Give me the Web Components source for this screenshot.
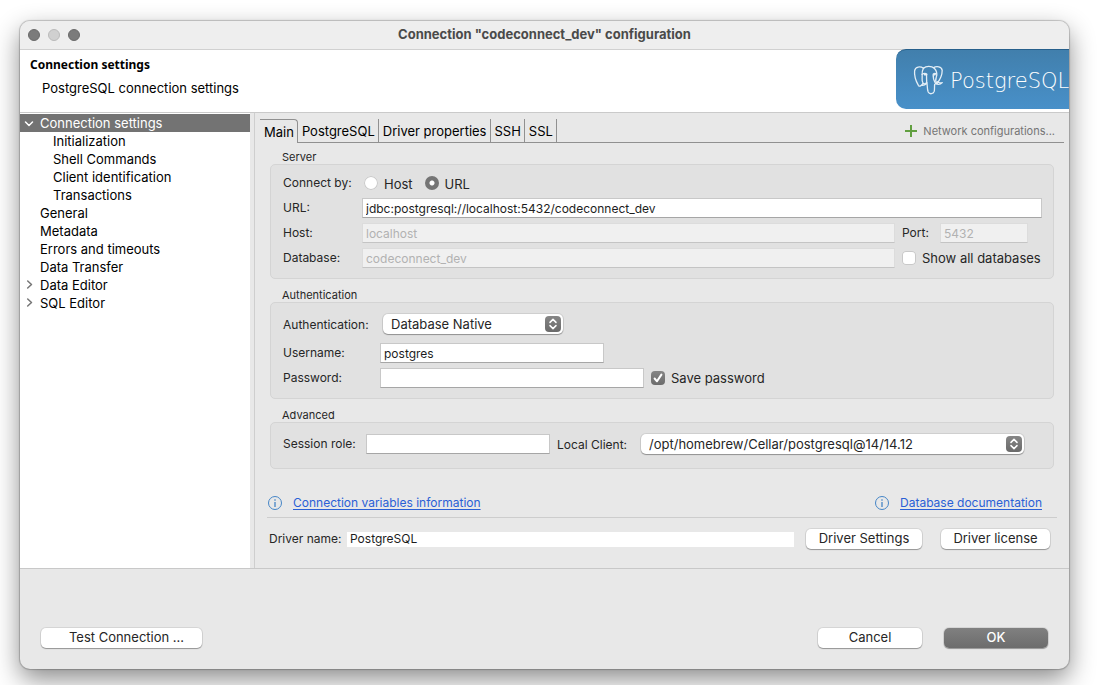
<!DOCTYPE html>
<html lang="en">
<head>
<meta charset="utf-8">
<title>Connection "codeconnect_dev" configuration</title>
<style>
  html { height: 100%; }
  body {
    margin: 0; min-height: 100%; box-sizing: border-box; padding: 21px 28px 16px 20px;
    display: flex; background: #fff; overflow: hidden;
    font: 13px/18px Inter, "Liberation Sans", sans-serif; color: #000;
  }
</style>
</head>
<body>
<dialog-window>
  <title-bar slot="title">Connection "codeconnect_dev" configuration</title-bar>
  <dialog-header slot="header" heading="Connection settings">PostgreSQL connection settings</dialog-header>
  <settings-tree slot="sidebar">
    <tree-item state="open" selected>Connection settings</tree-item>
    <tree-item level="1">Initialization</tree-item>
    <tree-item level="1">Shell Commands</tree-item>
    <tree-item level="1">Client identification</tree-item>
    <tree-item level="1">Transactions</tree-item>
    <tree-item>General</tree-item>
    <tree-item>Metadata</tree-item>
    <tree-item>Errors and timeouts</tree-item>
    <tree-item>Data Transfer</tree-item>
    <tree-item state="closed">Data Editor</tree-item>
    <tree-item state="closed">SQL Editor</tree-item>
  </settings-tree>
  <connection-page slot="page"></connection-page>
  <dialog-footer slot="footer"></dialog-footer>
</dialog-window>

<script>
const define = (name, html, setup) => {
  const template = document.createElement('template');
  template.innerHTML = html;
  customElements.define(name, class extends HTMLElement {
    constructor() {
      super();
      this.attachShadow({ mode: 'open' }).append(template.content.cloneNode(true));
    }
    connectedCallback() { if (setup) setup(this, this.shadowRoot); }
  });
};

define('dialog-window', `
<style>
  :host { flex: 1; min-width: 0; display: flex; flex-direction: column; overflow: hidden;
    border-radius: 10px; background: #e8e8e8;
    box-shadow: 0 0 1px 1px rgba(0,0,0,.2), 0 10px 26px rgba(0,0,0,.46); }
  .body { flex: 1; display: flex; border-top: 1px solid #cacaca; border-bottom: 1px solid #c8c8c8; }
  .side { flex: none; width: 230px; padding-top: 1px; margin-right: 4px; background: #fff; }
  .page { flex: 1; min-width: 0; border-left: 1px solid #cecece; }
</style>
<slot name="title"></slot>
<slot name="header"></slot>
<div class="body">
  <div class="side"><slot name="sidebar"></slot></div>
  <div class="page"><slot name="page"></slot></div>
</div>
<slot name="footer"></slot>`);

define('title-bar', `
<style>
  :host { display: grid; grid-template-columns: 60px 1fr 60px; align-items: center; height: 28px;
    padding: 0 8px; background: #eee; border-bottom: 1px solid #d0d0d0; }
  .lights { display: flex; gap: 8px; }
  i { width: 12px; height: 12px; box-sizing: border-box; border-radius: 50%; background: #7b7b7b; border: 1px solid #6a6a6a; }
  i.off { background: #d0d0d0; border-color: #bababa; }
  h1 { margin: 0; font-size: 13px; font-weight: 700; line-height: 18px; padding-bottom: 2px; text-align: center; color: #4a4a4a; }
</style>
<div class="lights"><i></i><i class="off"></i><i></i></div>
<h1><slot></slot></h1>`);

define('dialog-header', `
<style>
  :host { display: flex; justify-content: space-between; height: 62px; background: #fff; }
  .text { padding: 6px 0 0 10px; }
  h2 { margin: 0 0 5px; font: bold 12px/18px "Noto Sans", "Open Sans", sans-serif; }
  p { margin: 0 0 0 12px; }
</style>
<div class="text"><h2></h2><p><slot></slot></p></div>
<postgres-banner></postgres-banner>`, (host, root) => {
  root.querySelector('h2').textContent = host.getAttribute('heading');
});

define('postgres-banner', `
<style>
  :host { display: flex; align-items: center; gap: 6px; box-sizing: border-box; width: 173px; height: 60px;
    margin-top: -1px; padding-left: 17px; position: relative; overflow: hidden; white-space: nowrap; color: #fff;
    border-top: 1px solid #265f8b; border-radius: 10px 0 0 10px;
    background: linear-gradient(#417fac, #4890c9); }
  svg { flex: none; }
  span { font: 200 21px/24px "DejaVu Sans Light", "DejaVu Sans", sans-serif; padding-top: 3px; }
</style>
<svg width="31" height="30" viewBox="0 0 31 30" fill="none" stroke="#e3eef6" stroke-width="1.3" stroke-linecap="round" stroke-linejoin="round" aria-hidden="true">
  <path d="M10.500 3.200C7.500 1.200 2.200 1.200 1.600 5.800C1.200 10.500 3.400 17 5.400 20.300C6.700 22.300 8.500 20.500 10 18.500"/>
  <path d="M10.500 3.200C13 .8 18.500 .8 21.300 3.200C24 6 24.500 9 23.200 12.500C22.300 14.800 22.800 17 24 18.600"/>
  <path d="M10.500 3.200C8.600 6.200 9 9 9.200 12C9 15 8.600 16.500 10.200 18.400C12.300 19.800 13.800 18.200 13.700 16C13.600 13.500 13.300 12 13.700 9.200"/>
  <path d="M9 9.400C11 8.200 12.800 8.400 13.700 9.200M20.200 9.200C21 8.400 22.500 8.200 23.600 8.800M20.200 9.200C19.800 12.500 20.500 15 22.600 18.600"/>
  <path d="M20.600 2.600C23.500 .9 28.700 1.300 29.200 5.300C29.200 10 26.200 15.800 23.900 18.600"/>
  <path d="M22.600 18.600C24.600 19.500 27.600 19.300 29.300 17.600C27 18 25 17.500 24.300 16.600M13.500 18.500C11.800 20.200 9.600 20.600 8.600 20.300M14 17.500C14.300 21 14.200 24.500 15.200 27C16.500 29.600 20.300 29.200 21.200 26.400C21.800 24 21.300 21.500 21.700 19.300"/>
  <path d="M11.800 9.700h1M21 9.500h1" stroke-width="1.8"/>
</svg>
<span>PostgreSQL</span>`);

define('settings-tree', `
<style>:host { display: block; }</style>
<div role="tree" aria-label="Settings pages"><slot></slot></div>`);

define('tree-item', `
<style>
  :host { display: flex; height: 18px; align-items: center; white-space: nowrap; }
  :host([selected]) { background: #737373; color: #fff; }
  :host([level="1"]) svg { width: 33px; }
  svg { flex: none; width: 20px; height: 18px; fill: none; stroke: #757575; stroke-width: 1.500; stroke-linecap: round; stroke-linejoin: round; }
  :host([selected]) svg { stroke: #fff; }
  path { display: none; }
  :host([state="open"]) .down, :host([state="closed"]) .right { display: inline; }
  span { line-height: 18px; }
</style>
<svg aria-hidden="true"><path class="down" d="M5.500 8L9 11.500L12.500 8"/><path class="right" d="M7.700 5L11.500 8.500L7.700 12"/></svg><span><slot></slot></span>`,
(host) => { host.setAttribute('role', 'treeitem'); });

define('tab-strip', `
<style>
  :host { display: flex; height: 24px; }
  button { flex: none; appearance: none; margin: 0; padding: 0 3px 0 4px; height: 24px; background: none; font: inherit; color: #000;
    border: 0; border-right: 1px solid #909090; border-bottom: 1px solid #909090; }
  button.on { border-top: 1px solid #909090; border-bottom: 0; border-top-right-radius: 4px; }
  .rest { flex: 1; display: flex; justify-content: flex-end; border-bottom: 1px solid #909090; }
  .rest button { display: flex; align-items: center; gap: 6px; border: 0; padding: 0 9px 0 0; height: 23px;
    color: #757575; font-size: 11px; }
</style>
<button class="on" role="tab" aria-selected="true">Main</button><button role="tab">PostgreSQL</button><button role="tab">Driver properties</button><button role="tab">SSH</button><button role="tab">SSL</button>
<div class="rest"><button><svg width="12" height="12" aria-hidden="true"><path d="M6 0V12M0 6H12" stroke="#619f40" stroke-width="2"/></svg>Network configurations...</button></div>`);

define('group-box', `
<style>
  :host { display: block; margin: 0 10px 9px 10px; }
  h3 { margin: 0 0 0 12px; font-size: 11px; font-weight: 400; line-height: 14px; color: #262626; }
  .box { display: flex; flex-direction: column; gap: 5px; padding: 8px 11px 10px 12px;
    border: 1px solid #d4d4d4; border-radius: 5px; background: #e1e1e1; }
</style>
<h3></h3><div class="box" role="group"><slot></slot></div>`, (host, root) => {
  root.querySelector('h3').textContent = host.getAttribute('heading');
});

define('text-field', `
<style>
  :host { display: flex; align-items: center; height: 20px; font-size: 12px; min-width: 0; color: #262626; }
  label { flex: none; width: var(--label, 79px); white-space: nowrap; }
  input { flex: 1; min-width: 0; height: 20px; box-sizing: border-box; margin: 0; padding: 0 3px; border: 1px solid #c8c8c8;
    border-bottom-color: #a6a6a6; border-radius: 0; background: #fff; color: #1d1d1d; font: inherit; outline: 0; }
  input:disabled { background: #f0f0f0; border-color: #dcdcdc; border-bottom-color: #c4c4c4; color: #b2b2b2; }
  :host([plain]) input { height: 15px; border: 0; }
</style>
<label for="f"></label><input id="f">`, (host, root) => {
  const input = root.querySelector('input');
  root.querySelector('label').textContent = host.getAttribute('label');
  input.type = host.getAttribute('type') || 'text';
  input.value = host.getAttribute('value') || '';
  input.disabled = host.hasAttribute('disabled');
});

define('check-box', `
<style>
  :host { display: flex; align-items: center; font-size: 12px; color: #262626; white-space: nowrap; }
  label { display: flex; align-items: center; gap: 6px; }
  .mark { display: grid; width: 14px; height: 14px; }
  .mark > * { grid-area: 1 / 1; }
  input { appearance: none; margin: 0; width: 14px; height: 14px; border-radius: 4px; background: #fff;
    box-shadow: inset 0 0 0 1px #c9c9c9; }
  input:checked { background: linear-gradient(#858585, #6b6b6b); box-shadow: none; }
  svg { display: none; pointer-events: none; }
  input:checked + svg { display: block; }
  span { font-size: 13px; }
</style>
<label><div class="mark"><input type="checkbox"><svg width="14" height="14" aria-hidden="true"><path d="M3.600 7.500L6 10.300L10.400 3.600" fill="none" stroke="#fff" stroke-width="2" stroke-linecap="round" stroke-linejoin="round"/></svg></div><span><slot></slot></span></label>`,
(host, root) => { root.querySelector('input').checked = host.hasAttribute('checked'); });

define('radio-set', `
<style>
  :host { display: flex; align-items: center; height: 20px; font-size: 12px; color: #262626; }
  .name { flex: none; width: 81px; }
  label { display: flex; align-items: center; gap: 6px; margin-right: 12px; font-size: 13px; }
  label span { padding-top: 2px; }
  input { appearance: none; width: 14px; height: 14px; margin: 0; border-radius: 50%; background: #fff; box-shadow: inset 0 0 0 1px #c9c9c9; }
  input:checked { background: radial-gradient(circle, #fff 0 2px, #757575 3px); box-shadow: none; }
</style>
<span class="name">Connect by:</span>
<label><input type="radio" name="by"><span>Host</span></label><label><input type="radio" name="by" checked><span>URL</span></label>`);

define('pop-up', `
<style>
  :host { display: flex; align-items: center; height: 26px; font-size: 12px; color: #262626; }
  label { flex: none; width: var(--label); padding-top: 2px; white-space: nowrap; }
  .control { flex: 1; display: grid; align-items: center; min-width: 0; }
  .control > * { grid-area: 1 / 1; }
  select { appearance: none; width: 100%; height: 20px; margin: 0; padding: 0 24px 1px 8px; border: 0; border-radius: 5px; background: #fff;
    box-shadow: 0 0 0 1px rgba(0,0,0,.08), 0 1px 1px rgba(0,0,0,.3); font: inherit; font-size: 13px; color: #262626; outline: 0; }
  svg { justify-self: end; margin-right: 2px; pointer-events: none; }
</style>
<label for="s"></label>
<div class="control"><select id="s"><option></option></select>
<svg width="16" height="16" aria-hidden="true"><defs><linearGradient id="g" x2="0" y2="1"><stop stop-color="#868686"/><stop offset="1" stop-color="#6a6a6a"/></linearGradient></defs><rect width="16" height="16" rx="4" fill="url(#g)"/><path d="M5 6.400L8 3.400L11 6.400M5 9.600L8 12.600L11 9.600" fill="none" stroke="#fff" stroke-width="1.500" stroke-linecap="round" stroke-linejoin="round"/></svg></div>`,
(host, root) => {
  root.querySelector('label').textContent = host.getAttribute('label');
  root.querySelector('option').textContent = host.getAttribute('value');
});

define('push-button', `
<style>
  :host { display: block; }
  button { display: block; width: 100%; height: 20px; margin: 0; padding: 0 0 2px; border: 0; border-radius: 5px; background: #fff; color: #262626;
    font: inherit; line-height: 18px; white-space: nowrap; box-shadow: 0 0 0 1px rgba(0,0,0,.08), 0 1px 1px rgba(0,0,0,.3); }
  :host([primary]) button { background: linear-gradient(#808080, #6c6c6c); color: #fff; font-weight: 500; }
  :host([leading]) button { padding-left: 10px; }
</style>
<button><slot></slot></button>`);

define('info-link', `
<style>
  :host { display: flex; align-items: center; gap: 11px; height: 16px; font-size: 12px; }
  a { color: #2a60d6; line-height: 16px; white-space: nowrap; text-underline-offset: 2px; }
</style>
<svg width="14" height="14" aria-hidden="true"><circle cx="7" cy="7" r="6.500" fill="none" stroke="#4585c6"/><path d="M7 6V11M7 3.300V4.700" stroke="#4585c6" stroke-width="1.300"/></svg>
<a href="#"><slot></slot></a>`);

define('connection-page', `
<style>
  :host { display: block; padding: 6px 5px 0; }
  tab-strip { margin-bottom: 7px; }
  .pair { display: flex; gap: 7px; }
  .pair > text-field { flex: 1; }
  .pair > .extra { flex: none; width: 140px; display: flex; }
  .port { --label: 38px; width: 126px; }
  .native { --label: 100px; width: 280px; margin-bottom: 1px; }
  .auth { --label: 97px; }
  .user { width: 321px; }
  .secret { display: flex; gap: 7px; }
  .secret text-field { width: 361px; }
  .advanced { display: flex; align-items: center; gap: 7px; margin: 0 18px 1px 0; }
  .advanced text-field { --label: 83px; width: 267px; }
  .advanced pop-up { --label: 84px; flex: 1; }
  .links { display: flex; justify-content: space-between; margin: 26px 7px 0; padding: 0 15px 6px 1px; border-bottom: 1px solid #cdcdcd; }
  .driver { display: flex; align-items: center; margin: 11px 14px 0 9px; }
  .driver text-field { --label: 78px; flex: 1; margin-right: 12px; }
  .settings { width: 116px; margin-right: 19px; }
  .license { width: 109px; }
</style>
<tab-strip></tab-strip>
<group-box heading="Server">
  <radio-set></radio-set>
  <text-field label="URL:" value="jdbc:postgresql://localhost:5432/codeconnect_dev"></text-field>
  <div class="pair"><text-field label="Host:" value="localhost" disabled></text-field><div class="extra"><text-field class="port" label="Port:" value="5432" disabled></text-field></div></div>
  <div class="pair"><text-field label="Database:" value="codeconnect_dev" disabled></text-field><div class="extra"><check-box>Show all databases</check-box></div></div>
</group-box>
<group-box heading="Authentication" class="auth">
  <pop-up class="native" label="Authentication:" value="Database Native"></pop-up>
  <text-field class="user" label="Username:" value="postgres"></text-field>
  <div class="secret"><text-field label="Password:" type="password"></text-field><check-box checked>Save password</check-box></div>
</group-box>
<group-box heading="Advanced">
  <div class="advanced"><text-field label="Session role:"></text-field><pop-up label="Local Client:" value="/opt/homebrew/Cellar/postgresql@14/14.12"></pop-up></div>
</group-box>
<div class="links"><info-link>Connection variables information</info-link><info-link>Database documentation</info-link></div>
<div class="driver"><text-field plain label="Driver name:" value="PostgreSQL"></text-field><push-button class="settings">Driver Settings</push-button><push-button class="license">Driver license</push-button></div>`);

define('dialog-footer', `
<style>
  :host { display: flex; padding: 59px 21px 21px; }
  .test { width: 161px; margin-right: auto; }
  .cancel { width: 104px; margin-right: 22px; }
  .ok { width: 104px; }
</style>
<push-button class="test" leading>Test Connection ...</push-button><push-button class="cancel">Cancel</push-button><push-button class="ok" primary>OK</push-button>`);
</script>
</body>
</html>
